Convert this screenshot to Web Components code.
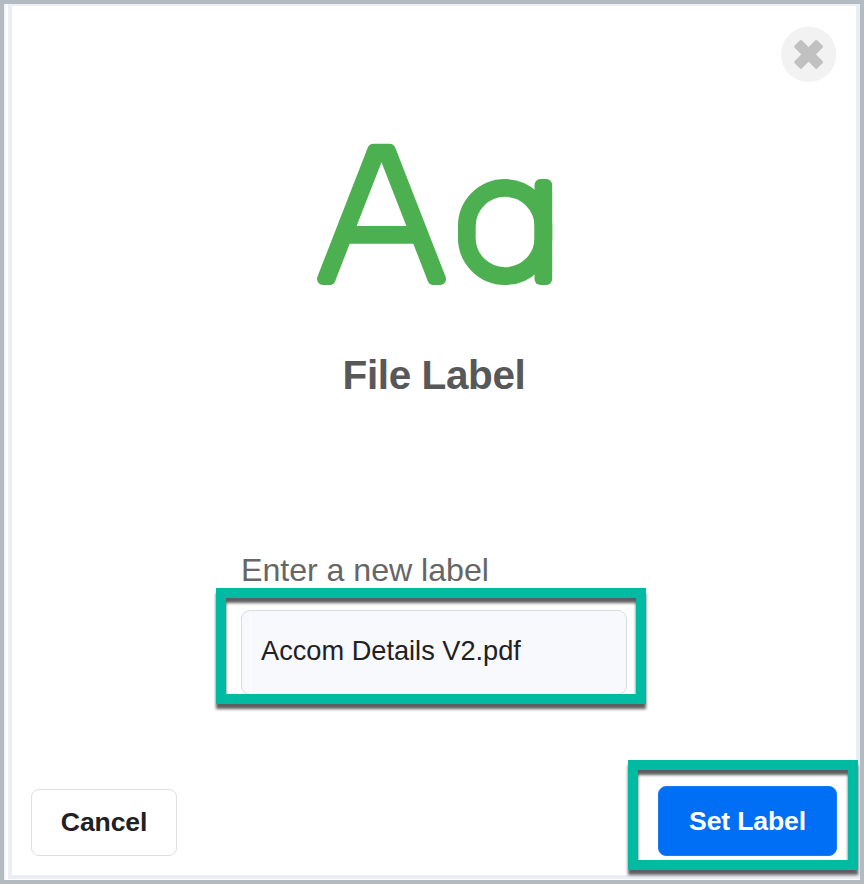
<!DOCTYPE html>
<html lang="en">
<head>
<meta charset="utf-8">
<title>File Label</title>
<style>
html, body { height: 100%; }
body {
    margin: 0;
    font-family: "Liberation Sans", Arial, sans-serif;
    color: #202124;
}
</style>
</head>
<body>
<label-dialog>
    <close-button slot="close"></close-button>
    <letter-icon slot="icon"></letter-icon>
    <span slot="title">File Label</span>
    <label-field slot="field" label="Enter a new label">Accom Details V2.pdf</label-field>
    <dialog-button slot="actions">Cancel</dialog-button>
    <highlight-box slot="actions" style="--pad: 16px 11px 4px 20px">
        <dialog-button primary>Set Label</dialog-button>
    </highlight-box>
</label-dialog>

<script>
function makeTemplate(html) {
    const template = document.createElement('template')
    template.innerHTML = html
    return template
}

class BaseComponent extends HTMLElement {
    constructor() {
        super();
        this.attachShadow({mode: 'open'});
        this.shadowRoot.appendChild(this.constructor.template.content.cloneNode(true));
    }
}

class LabelDialog extends BaseComponent {
    static template = makeTemplate(`<style>
        :host {
            display: block;
            box-sizing: border-box;
            width: 864px;
            height: 884px;
            border: 4px solid #b4bbc0;
            background: #fff;
            overflow: hidden;
        }
        .edge {
            box-sizing: border-box;
            height: 100%;
            border-left: 2px solid #f2f4f8;
            padding: 0 0 1px 2px;
        }
        .content {
            box-sizing: border-box;
            height: 100%;
            border: solid #ebeff5;
            border-width: 2px 4px 4px 4px;
            display: flex;
            flex-direction: column;
            align-items: center;
        }
        header {
            align-self: stretch;
            display: flex;
            justify-content: flex-end;
            padding: 20px 19px 0 0;
        }
        h2 {
            margin: 67px 0 0;
            font-size: 40.5px;
            letter-spacing: -.4px;
            line-height: 46px;
            color: #585858;
        }
        .field { margin: 155px 6px 0 0; }
        footer {
            align-self: stretch;
            display: flex;
            justify-content: space-between;
            align-items: center;
            margin: 56px -2px 0 19px;
        }
    </style>
    <div class="edge">
        <div class="content">
            <header><slot name="close"></slot></header>
            <slot name="icon"></slot>
            <h2><slot name="title"></slot></h2>
            <div class="field"><slot name="field"></slot></div>
            <footer><slot name="actions"></slot></footer>
        </div>
    </div>`)
}
customElements.define('label-dialog', LabelDialog)

class CloseButton extends BaseComponent {
    static template = makeTemplate(`<style>
        :host { display: block; width: 56px; height: 56px; }
        svg { display: block; }
    </style>
    <svg width="56" height="56" viewBox="0 0 56 56">
        <circle cx="27.7" cy="28.3" r="27.7" fill="#f2f2f2"/>
        <g fill="#c1c1c1" transform="translate(27.6 28.4)">
            <rect x="-16.1" y="-5.2" width="32.2" height="10.4" rx="1.6" transform="rotate(45)"/>
            <rect x="-16.1" y="-5.2" width="32.2" height="10.4" rx="1.6" transform="rotate(-45)"/>
        </g>
    </svg>`)
}
customElements.define('close-button', CloseButton)

class LetterIcon extends BaseComponent {
    static template = makeTemplate(`<style>
        :host { display: block; width: 236px; height: 142px; margin: 61px 0 0 2px; }
        svg { display: block; }
    </style>
    <svg width="236" height="142" viewBox="317 143 236 142" fill="none" stroke="#4caf50">
        <g stroke-width="12" stroke-linecap="round" stroke-linejoin="round">
            <polyline points="329.5,279 323,279 373.4,149.7 389.6,149.7 440,279 433.5,279"/>
            <line x1="329.5" y1="279" x2="379.9" y2="149.9"/>
            <line x1="433.5" y1="279" x2="383.1" y2="149.9"/>
        </g>
        <line x1="345" y1="234.9" x2="418" y2="234.9" stroke-width="17.7"/>
        <rect x="466.8" y="187.9" width="76.6" height="88.2" rx="38.3" stroke-width="17.7"/>
        <rect x="534.5" y="179" width="17.7" height="106" rx="6" fill="#4caf50" stroke="none"/>
    </svg>`)
}
customElements.define('letter-icon', LetterIcon)

// teal frame round whatever is slotted, the shadow falls inside as well as outside
class HighlightBox extends BaseComponent {
    static template = makeTemplate(`<style>
        :host { display: grid; }
        .inner, .frame { grid-area: 1 / 1; }
        .inner { margin: 10px; padding: var(--pad); overflow: hidden; }
        .frame {
            border: 10px solid #00baa2;
            filter: drop-shadow(0 5px 1.8px rgba(0, 0, 0, .63));
            pointer-events: none;
            z-index: 1;
        }
    </style>
    <div class="inner"><slot></slot></div>
    <div class="frame"></div>`)
}
customElements.define('highlight-box', HighlightBox)

class LabelField extends BaseComponent {
    static template = makeTemplate(`<style>
        :host { display: block; width: 430px; }
        label {
            display: block;
            padding-left: 25px;
            font-size: 32.2px;
            letter-spacing: -.05px;
            line-height: 35px;
            color: #666;
        }
        highlight-box { --pad: 12px 9px 0 15px; }
        .input {
            box-sizing: border-box;
            height: 85px;
            margin-bottom: -1px;
            padding-left: 19px;
            border: 1px solid #d9dbdd;
            border-radius: 9px;
            background: linear-gradient(#fdfdff, #fdfdff) 8px 0 / 1px 100% no-repeat #f8f9fd;
            font-size: 27.2px;
            line-height: 80px;
        }
    </style>
    <label></label>
    <highlight-box><div class="input"><slot></slot></div></highlight-box>`)
    connectedCallback() {
        this.shadowRoot.querySelector('label').innerText = this.getAttribute('label')
    }
}
customElements.define('label-field', LabelField)

class DialogButton extends BaseComponent {
    static template = makeTemplate(`<style>
        :host { display: block; margin-top: 14px; }
        button {
            display: block;
            box-sizing: border-box;
            width: 146px;
            height: 67px;
            padding: 1px 0 0;
            border: 1px solid #dfdfdf;
            border-radius: 8px;
            background: #fff;
            color: inherit;
            font: bold 26.6px "Liberation Sans", Arial, sans-serif;
            letter-spacing: -.15px;
        }
        :host([primary]) { margin: 0; }
        :host([primary]) button {
            width: 179px;
            height: 70px;
            border-color: #1a7cf5;
            background: #006ef5;
            color: #fff;
        }
    </style>
    <button><slot></slot></button>`)
}
customElements.define('dialog-button', DialogButton)
</script>
</body>
</html>
